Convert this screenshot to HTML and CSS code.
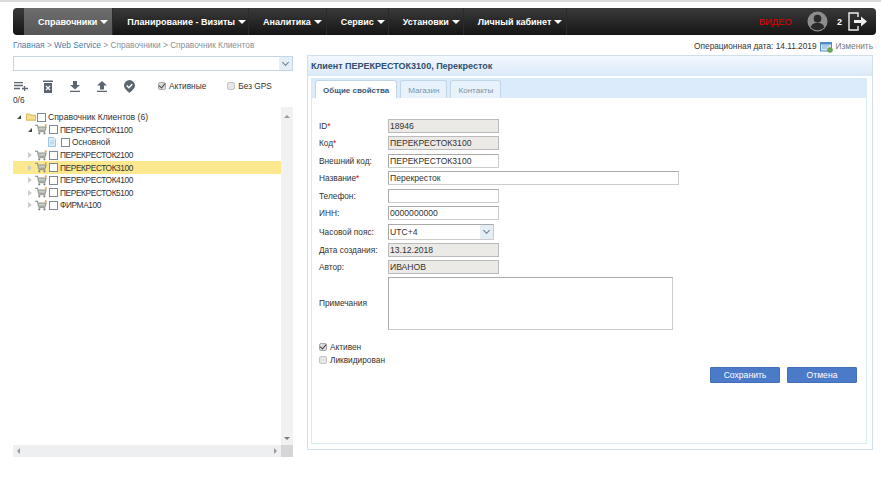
FILE: index.html
```html
<!DOCTYPE html>
<html lang="en">
<head>
    <meta charset="UTF-8">
    <title>Справочник Клиентов</title>
    <link rel="stylesheet" href="styles.css">
</head>
<body>
<svg class="sprites" width="0" height="0">
    <symbol id="cart" viewBox="0 0 14 12">
        <path d="M0 1h3l1 6h8l1-4H4" fill="#c9cdc4" stroke="#8d938a" stroke-width="1.2"/>
        <path d="M4 8.5h8" stroke="#8d938a" stroke-width="1.2"/>
        <circle cx="5" cy="10.5" r="1.3" fill="#7f857c"/>
        <circle cx="11" cy="10.5" r="1.3" fill="#7f857c"/>
        <rect x="11.5" y="0" width="2" height="2" fill="#d9a441"/>
    </symbol>
</svg>

<div class="topline"></div>
<div class="page">
    <!-- Navbar -->
    <div class="navbar">
        <div class="nav-item active">Справочники <i class="caret"></i></div>
        <div class="nav-item">Планирование - Визиты <i class="caret"></i></div>
        <div class="nav-item">Аналитика <i class="caret"></i></div>
        <div class="nav-item">Сервис <i class="caret"></i></div>
        <div class="nav-item">Установки <i class="caret"></i></div>
        <div class="nav-item">Личный кабинет <i class="caret"></i></div>
        <div class="nav-right">
            <span class="video">ВИДЕО</span>
            <svg class="avatar" width="21" height="21" viewBox="0 0 22 22">
                <circle cx="11" cy="11" r="10.5" fill="#8c8c8c"/>
                <circle cx="11" cy="8" r="4" fill="#2a2a2a"/>
                <path d="M3.8 17c1.2-3.4 4-4.6 7.2-4.6s6 1.2 7.2 4.6c-1.8 2-4.4 3.2-7.2 3.2s-5.4-1.2-7.2-3.2z" fill="#2a2a2a"/>
            </svg>
            <span class="user-count">2</span>
            <svg class="logout" width="20" height="19" viewBox="0 0 20 19">
                <path d="M10 5V1H1v17h9v-4" fill="none" stroke="#eee" stroke-width="1.4"/>
                <path d="M6 8h7V4.500l6 5-6 5V11H6z" fill="#eee"/>
            </svg>
        </div>
    </div>

    <!-- Breadcrumbs -->
    <div class="crumb-row">
        <div class="crumbs"><a>Главная</a> &gt; <a>Web Service</a> &gt; Справочники &gt; Справочник Клиентов</div>
        <div class="opdate">
            Операционная дата: 14.11.2019
            <svg width="13" height="12" viewBox="0 0 13 12">
                <rect x="0.500" y="1.500" width="11" height="8.500" fill="#dbe9f6" stroke="#4f8cc4"/>
                <path d="M0 1h12v2.500H0z" fill="#4f8cc4"/>
                <path d="M2 5h7M2 7h5" stroke="#7fa9cf"/>
                <circle cx="10" cy="9" r="2.800" fill="#69a84f"/>
            </svg>
            <span class="change">Изменить</span>
        </div>
    </div>

    <div class="main">
        <!-- Left column -->
        <div class="left">
            <div class="combo"><span class="combo-btn"><i class="chevron"></i></span></div>
            <div class="toolbar">
                <svg class="tool" width="14" height="9" viewBox="0 0 14 9"><path d="M0 .7h9M0 3.500h9M0 6.500h6M10.500 4v5M8 6.500h6" stroke="#5c6670" stroke-width="1.300" fill="none"/></svg>
                <svg class="tool" width="10" height="13" viewBox="0 0 10 13"><path d="M0 .5h10v1.500H0zM1 3h8v10H1z" fill="#5c6670"/><path d="M3 6l4 4M7 6l-4 4" stroke="#fff" stroke-width="1.200"/></svg>
                <svg class="tool" width="10" height="11" viewBox="0 0 10 11"><path d="M3 0h4v4h3L5 8.500 0 4h3zM0 9.800h10V11H0z" fill="#5c6670"/></svg>
                <svg class="tool" width="10" height="11" viewBox="0 0 10 11"><path d="M5 0l5 4.500H7v4H3v-4H0zM0 9.800h10V11H0z" fill="#5c6670"/></svg>
                <svg class="tool" width="11" height="13" viewBox="0 0 12 14"><path d="M6 0a6 6 0 0 1 6 6c0 3.500-4 6.500-6 8-2-1.500-6-4.500-6-8a6 6 0 0 1 6-6z" fill="#5c6670"/><path d="M3 6l2.300 2.300L9 4.500" stroke="#fff" stroke-width="1.500" fill="none"/></svg>
                <label class="check first"><i class="box checked"></i>Активные</label>
                <label class="check"><i class="box"></i>Без GPS</label>
            </div>
            <div class="counter">0/6</div>
            <div class="tree-wrap">
                <div class="tree">
                    <div class="node lvl0"><i class="arrow open"></i>
                        <svg class="folder" width="10" height="8" viewBox="0 0 14 11"><path d="M.500 10V1.500h5l1 1.500h7v7z" fill="#f6e08d" stroke="#c49a2c"/></svg>
                        <i class="tree-box"></i>Справочник Клиентов (6)</div>
                    <div class="node lvl1"><i class="arrow open"></i><svg class="cart"><use href="#cart"/></svg><i class="tree-box"></i>ПЕРЕКРЕСТОК1100</div>
                    <div class="node lvl2"><svg class="doc" width="8" height="10" viewBox="0 0 11 13"><path d="M.500.500h7l3 3v9H.500z" fill="#e3f1fb" stroke="#6aa8d8"/><path d="M2.500 5h6M2.500 7h6M2.500 9h6" stroke="#9cc6e6"/></svg><i class="tree-box"></i>Основной</div>
                    <div class="node lvl1"><i class="arrow"></i><svg class="cart"><use href="#cart"/></svg><i class="tree-box"></i>ПЕРЕКРЕСТОК2100</div>
                    <div class="node lvl1 selected"><i class="arrow"></i><svg class="cart"><use href="#cart"/></svg><i class="tree-box"></i>ПЕРЕКРЕСТОК3100</div>
                    <div class="node lvl1"><i class="arrow"></i><svg class="cart"><use href="#cart"/></svg><i class="tree-box"></i>ПЕРЕКРЕСТОК4100</div>
                    <div class="node lvl1"><i class="arrow"></i><svg class="cart"><use href="#cart"/></svg><i class="tree-box"></i>ПЕРЕКРЕСТОК5100</div>
                    <div class="node lvl1"><i class="arrow"></i><svg class="cart"><use href="#cart"/></svg><i class="tree-box"></i>ФИРМА100</div>
                </div>
                <div class="vscroll"><i class="tri up"></i><i class="tri down"></i></div>
                <div class="hscroll"><i class="tri left-t"></i><i class="tri right-t"></i></div>
                <div class="corner"></div>
            </div>
        </div>

        <!-- Client panel -->
        <div class="panel">
            <div class="panel-title">Клиент ПЕРЕКРЕСТОК3100, Перекресток</div>
            <div class="panel-body">
                <div class="tabs">
                    <div class="tab active">Общие свойства</div>
                    <div class="tab">Магазин</div>
                    <div class="tab">Контакты</div>
                </div>
                <div class="form">
                    <div class="row"><label>ID<b>*</b></label><div class="input ro w-short">18946</div></div>
                    <div class="row"><label>Код<b>*</b></label><div class="input ro w-short">ПЕРЕКРЕСТОК3100</div></div>
                    <div class="row"><label>Внешний код:</label><div class="input w-short">ПЕРЕКРЕСТОК3100</div></div>
                    <div class="row"><label>Название<b>*</b></label><div class="input w-long">Перекресток</div></div>
                    <div class="row"><label>Телефон:</label><div class="input w-short"></div></div>
                    <div class="row"><label>ИНН:</label><div class="input w-short">0000000000</div></div>
                    <div class="row row-select"><label>Часовой пояс:</label><div class="input select">UTC+4<span class="combo-btn"><i class="chevron"></i></span></div></div>
                    <div class="row"><label>Дата создания:</label><div class="input ro w-short">13.12.2018</div></div>
                    <div class="row"><label>Автор:</label><div class="input ro w-short">ИВАНОВ</div></div>
                    <div class="row row-notes"><label>Примечания</label><div class="input notes"></div></div>
                    <label class="check form-check"><i class="box checked"></i>Активен</label>
                    <label class="check form-check"><i class="box"></i>Ликвидирован</label>
                    <div class="buttons">
                        <button>Сохранить</button>
                        <button>Отмена</button>
                    </div>
                </div>
            </div>
        </div>
    </div>
</div>
</body>
</html>
```

FILE: styles.css
```css
* {
    box-sizing: border-box;
}

body {
    margin: 0;
    font-family: "Liberation Sans", Arial, sans-serif;
    font-size: 8.300px;
    color: #333;
    background-color: #fff;
    overflow: hidden;
}

.sprites {
    position: absolute;
}

.topline {
    height: 2px;
    background-color: #d9d9d9;
}

.page {
    padding: 6px 5px 0 13px;
}

/* Navbar */
.navbar {
    display: flex;
    align-items: center;
    height: 27px;
    padding-left: 11px;
    background: linear-gradient(#3a3a3a, #151515);
    border-radius: 4px;
    color: #fff;
}

.nav-item {
    display: flex;
    align-items: center;
    height: 100%;
    padding: 0 4px 0 14px;
    font-size: 9px;
    font-weight: bold;
    white-space: nowrap;
    border-right: 1px solid #2b2b2b;
}

.nav-item:nth-child(2) { padding-right: 2px; }
.nav-item:nth-child(4) { padding-right: 3px; }
.nav-item:nth-child(5) { padding-right: 3px; }

.nav-item.active {
    background: linear-gradient(#6e6e6e, #565656);
}

.caret {
    display: inline-block;
    margin-left: 3px;
    border-top: 4px solid #fff;
    border-left: 4px solid transparent;
    border-right: 4px solid transparent;
}

.nav-right {
    display: flex;
    align-items: center;
    margin-left: auto;
    padding-right: 8px;
}

.video {
    color: #e00000;
    font-size: 9.500px;
    margin-right: 15px;
}

.user-count {
    margin: 0 6px 0 9px;
    font-weight: bold;
    font-size: 9px;
}

/* Breadcrumbs */
.crumb-row {
    display: flex;
    justify-content: space-between;
    height: 18px;
    padding: 5px 3px 0 0;
    color: #8a8f96;
}

.crumbs a {
    color: #4a7ba8;
}

.opdate {
    display: flex;
    align-items: flex-start;
    gap: 3px;
    margin-top: 1px;
    color: #333;
}

.change {
    color: #777;
}

.main {
    display: flex;
    gap: 14px;
}

/* Left column */
.left {
    width: 280px;
    flex: none;
}

.combo {
    display: flex;
    justify-content: flex-end;
    height: 15px;
    margin-top: 3px;
    border: 1px solid #c5d6e4;
}

.combo-btn {
    display: flex;
    align-items: center;
    justify-content: center;
    width: 13px;
    background-color: #e4eef7;
}

.chevron {
    width: 5px;
    height: 5px;
    margin-top: -3px;
    border-right: 1px solid #6f7f8e;
    border-bottom: 1px solid #6f7f8e;
    transform: rotate(45deg);
}

.toolbar {
    display: flex;
    align-items: center;
    height: 16px;
    margin-top: 7px;
    padding-left: 1px;
}

.tool {
    margin-right: 17px;
}

.tool:nth-child(1) { margin-right: 15px; }
.tool:nth-child(5) { margin-right: 23px; }

.check {
    display: flex;
    align-items: center;
    gap: 3px;
    color: #333;
}

.check.first {
    margin-right: 21px;
}

.box {
    display: block;
    position: relative;
    width: 8px;
    height: 8px;
    border: 1px solid #c4c4c4;
    border-radius: 2px;
    background-color: #e6e6e6;
}

.box.checked {
    background-color: #dcdcdc;
    border-color: #aaa;
}

.box.checked::after {
    content: "";
    position: absolute;
    left: 1px;
    top: -1px;
    width: 3px;
    height: 5px;
    border-right: 1.500px solid #444;
    border-bottom: 1.500px solid #444;
    transform: rotate(40deg);
}

.counter {
    margin-top: 1px;
    height: 13px;
}

.tree-wrap {
    display: grid;
    grid-template-columns: 268px 12px;
    grid-template-rows: 338px 12px;
    margin-top: -1px;
}

.tree {
    padding-top: 4px;
}

.node {
    display: flex;
    align-items: center;
    height: 12.600px;
    white-space: nowrap;
    color: #333;
}

.lvl0 { padding-left: 4px; font-size: 8.600px; }
.lvl1 { padding-left: 15px; letter-spacing: -0.370px; }
.lvl2 { padding-left: 35px; }

.node.selected {
    background-color: #fce98f;
}

.arrow {
    width: 0;
    height: 0;
    margin-right: 3px;
    border-left: 4px solid #ccc;
    border-top: 3px solid transparent;
    border-bottom: 3px solid transparent;
}

.arrow.open {
    border-left: 4px solid transparent;
    border-top: 0;
    border-bottom: 4px solid #444;
}

.lvl0 .arrow {
    margin-right: 5px;
}

.folder {
    margin-right: 1px;
}

.cart {
    width: 12px;
    height: 11px;
    margin-right: 2px;
}

.doc {
    margin-right: 5px;
}

.tree-box {
    width: 9px;
    height: 9px;
    margin-right: 2px;
    border: 1px solid #7d8a96;
    background-color: #fff;
}

.vscroll {
    display: flex;
    flex-direction: column;
    justify-content: space-between;
    align-items: center;
    padding: 8px 0 5px;
    background-color: #f1f1f2;
}

.hscroll {
    display: flex;
    justify-content: space-between;
    align-items: center;
    padding: 0 4px;
    background-color: #eeeff0;
}

.corner {
    background-color: #d6d6d8;
}

.tri {
    width: 0;
    height: 0;
}

.tri.up {
    border-left: 3px solid transparent;
    border-right: 3px solid transparent;
    border-bottom: 3px solid #9a9a9a;
}

.tri.down {
    border-left: 3px solid transparent;
    border-right: 3px solid transparent;
    border-top: 3px solid #7a7a7a;
}

.tri.left-t {
    border-top: 3px solid transparent;
    border-bottom: 3px solid transparent;
    border-right: 3px solid #9a9a9a;
}

.tri.right-t {
    border-top: 3px solid transparent;
    border-bottom: 3px solid transparent;
    border-left: 3px solid #9a9a9a;
}

/* Client panel */
.panel {
    width: 566px;
    height: 395px;
    margin-top: 2px;
    border: 1px solid #cfe0e8;
    background-color: #fff;
}

.panel-title {
    height: 20px;
    padding: 5px 0 0 3px;
    font-size: 9px;
    font-weight: bold;
    color: #2f4f6f;
    background: linear-gradient(#f2f8fe, #dbe9f8);
}

.panel-body {
    height: 366px;
    margin: 2px 5px 0 3px;
    border: 1px solid #d8eef2;
}

.tabs {
    display: flex;
    gap: 3px;
    height: 19px;
    padding: 1px 0 0 3px;
    background-color: #dcebfb;
}

.tab {
    padding: 5px 7px 0;
    font-size: 8.100px;
    color: #7d93a8;
    border: 1px solid #c3d6e6;
    border-bottom: 0;
    border-radius: 3px 3px 0 0;
    background-color: #e8f2fc;
}

.tab.active {
    color: #3c5a78;
    font-size: 8px;
    font-weight: bold;
    background-color: #fff;
}

.form {
    padding: 19px 9px 0 7px;
}

.row {
    display: flex;
    align-items: center;
    height: 17.500px;
}

.row label {
    width: 69px;
    flex: none;
}

.row label b {
    color: #d00;
    font-weight: normal;
}

.input {
    height: 14px;
    padding: 1px;
    font-size: 8.600px;
    line-height: 11px;
    border: 1px solid #aaa;
    border-bottom-color: #ccc;
    border-right-color: #ccc;
    background-color: #fff;
}

.ro {
    background-color: #eceae6;
    border-color: #bbb;
}

.w-short { width: 111px; }
.w-long { width: 291px; }

.row-select {
    height: 19px;
}

.select {
    display: flex;
    justify-content: space-between;
    width: 106px;
    height: 16px;
    padding: 2px 0 0 1px;
}

.select .combo-btn {
    height: 14px;
    margin-top: -2px;
}

.row-notes {
    height: 56px;
    margin-top: -1px;
}

.notes {
    width: 285px;
    height: 53px;
}

.form-check {
    height: 13.500px;
}

.row-notes + .form-check {
    margin-top: 9px;
}

.buttons {
    display: flex;
    justify-content: flex-end;
    gap: 7px;
}

button {
    width: 70px;
    height: 16px;
    padding: 0;
    font-family: inherit;
    font-size: 8.600px;
    color: #fff;
    background-color: #4a7ac8;
    border: 1px solid #4470b8;
    border-radius: 1px;
}
```
